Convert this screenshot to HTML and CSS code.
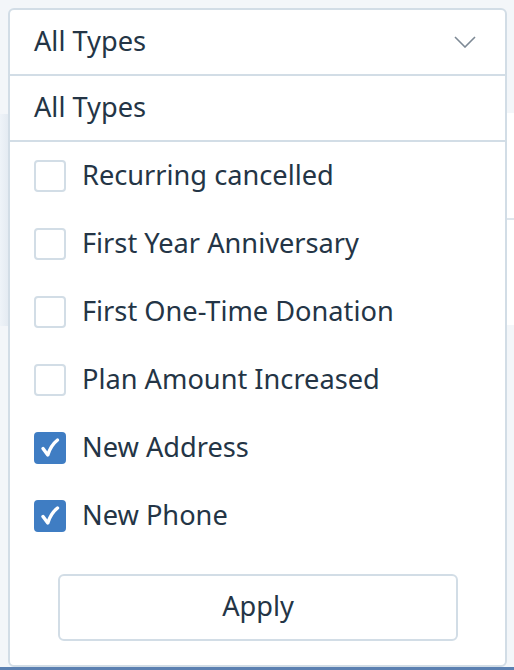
FILE: index.html
```html
<!DOCTYPE html>
<html>
<head>
<meta charset="utf-8">
<link rel="stylesheet" href="styles.css">
</head>
<body>
<div class="page">
  <div class="backdrop-shadow"></div>
  <div class="backdrop">
    <div class="bg-row"></div>
    <div class="bg-row"></div>
  </div>
  <div class="dropdown">
    <div class="select-head">
      <span class="select-value">All Types</span>
      <svg class="chevron" width="22" height="12" viewBox="0 0 22 12"><path d="M1 1 L11 11 L21 1" fill="none" stroke="#7d8995" stroke-width="1.6"/></svg>
    </div>
    <div class="all-row"><span class="all-text">All Types</span></div>
    <ul class="options">
      <li class="option"><span class="box"></span><span class="label">Recurring cancelled</span></li>
      <li class="option"><span class="box"></span><span class="label">First Year Anniversary</span></li>
      <li class="option"><span class="box"></span><span class="label">First One-Time Donation</span></li>
      <li class="option"><span class="box"></span><span class="label">Plan Amount Increased</span></li>
      <li class="option"><span class="box checked"><svg width="22" height="22" viewBox="0 0 22 22"><path d="M4 11.5 L8.8 18 C10.8 11.5 13.5 7 18.5 3" fill="none" stroke="#fff" stroke-width="3.4" stroke-linecap="round" stroke-linejoin="round"/></svg></span><span class="label">New Address</span></li>
      <li class="option"><span class="box checked"><svg width="22" height="22" viewBox="0 0 22 22"><path d="M4 11.5 L8.8 18 C10.8 11.5 13.5 7 18.5 3" fill="none" stroke="#fff" stroke-width="3.4" stroke-linecap="round" stroke-linejoin="round"/></svg></span><span class="label">New Phone</span></li>
    </ul>
    <div class="actions">
      <button class="apply"><span class="apply-text">Apply</span></button>
    </div>
  </div>
  <div class="bottom-bar"></div>
</div>
</body>
</html>
```
FILE: styles.css
```css
html, body {
  margin: 0;
  padding: 0;
}
body {
  background: #f3f6f9;
  font-family: "Noto Sans", "Open Sans", sans-serif;
  color: #243546;
  width: 514px;
  height: 670px;
  overflow: hidden;
}
.page {
  position: relative;
  width: 514px;
  height: 670px;
  padding-top: 8px;
  box-sizing: border-box;
}
.backdrop-shadow {
  position: absolute;
  left: 0;
  top: 114px;
  width: 9px;
  height: 212px;
  background: linear-gradient(to right, #eef3f8, #e3eaf1);
}
.backdrop {
  position: absolute;
  left: 500px;
  top: 113px;
  width: 14px;
  height: 212px;
  display: flex;
  flex-direction: column;
}
.bg-row {
  flex: 1;
  background: #ffffff;
  border-bottom: 2px solid #dde5ec;
}
.bg-row:last-child {
  border-bottom: none;
}
.dropdown {
  position: relative;
  margin-left: 8px;
  width: 499px;
  height: 659px;
  box-sizing: border-box;
  background: #fff;
  border: 2px solid #d2dde6;
  border-radius: 6px;
  display: flex;
  flex-direction: column;
}
.select-head {
  height: 64px;
  border-bottom: 2px solid #d2dde6;
  display: flex;
  align-items: center;
  justify-content: space-between;
  padding: 0 29px 0 24px;
}
.select-value, .all-text, .label, .apply {
  font-size: 27.2px;
  letter-spacing: 0;
}
.select-value, .all-text, .label, .apply-text {
  display: block;
  margin-bottom: 4px;
}
.chevron {
  display: block;
  margin-top: 0;
}
.all-row {
  height: 64px;
  border-bottom: 2px solid #d2dde6;
  display: flex;
  align-items: center;
  padding-left: 24px;
}
.options {
  list-style: none;
  margin: 0;
  padding: 0;
}
.option {
  height: 68px;
  display: flex;
  align-items: center;
  padding-left: 24px;
}
.box {
  width: 32px;
  height: 32px;
  box-sizing: border-box;
  border: 2px solid #d2dde6;
  border-radius: 4px;
  margin-right: 16px;
  display: flex;
  align-items: center;
  justify-content: center;
  flex: none;
}
.box.checked {
  background: #3f7dc3;
  border-color: #3f7dc3;
}
.box svg {
  display: block;
}
.label {
  white-space: nowrap;
}
.actions {
  display: flex;
  justify-content: center;
  margin-top: 24px;
}
.apply {
  width: 400px;
  height: 67px;
  background: #fff;
  border: 2px solid #d2dde6;
  border-radius: 6px;
  color: #243546;
  font-family: inherit;
  padding: 0;
  margin-left: 1px;
  display: flex;
  align-items: center;
  justify-content: center;
}
.bottom-bar {
  height: 3px;
  background: #5b80b1;
}
```
